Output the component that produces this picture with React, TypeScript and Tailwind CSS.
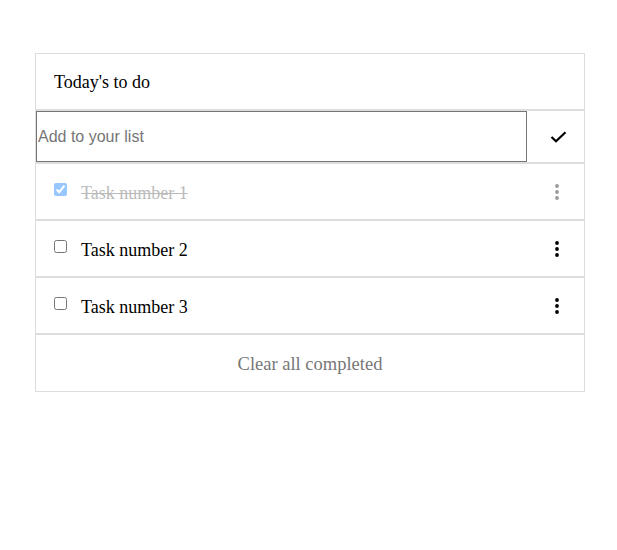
const Dots = ({ className = "" }: { className?: string }) => (
  <svg width="4" height="16" viewBox="0 0 4 16" className={className}>
    <circle cx="2" cy="2" r="1.9" fill="currentColor" />
    <circle cx="2" cy="8" r="1.9" fill="currentColor" />
    <circle cx="2" cy="14" r="1.9" fill="currentColor" />
  </svg>
);

const Task = ({ text, done }: { text: string; done?: boolean }) => (
  <li className="flex items-center h-[57px] border border-[#ddd] pl-[18px] pr-[25px]">
    <div className={`flex items-center flex-1 ${done ? "opacity-40" : ""}`}>
      <input type="checkbox" defaultChecked={done} className="w-[13px] h-[13px] m-0 -mt-1" />
      <span className={`ml-[14px] mt-[3px] text-[18px] ${done ? "line-through text-[#555]" : "text-black"}`}>
        {text}
      </span>
    </div>
    <Dots className={done ? "text-[#999]" : "text-black"} />
  </li>
);

export default function App() {
  return (
    <div className="w-[617px] h-[550px] bg-white pt-[53px] pl-[35px]" style={{ fontFamily: '"Liberation Serif", "Times New Roman", serif' }}>
      <div className="w-[550px]">
        <header className="h-[57px] border border-[#ddd] flex items-center pl-[18px] pt-[2px] text-[18px] text-black">
          Today's to do
        </header>
        <form className="flex border border-[#ddd] h-[53px]" onSubmit={(e) => e.preventDefault()}>
          <input
            placeholder="Add to your list"
            className="w-[491px] h-[51px] border border-[#767676] px-[1px] text-[16px] placeholder:text-[#757575] outline-none"
            style={{ fontFamily: '"Liberation Sans", Arial, sans-serif' }}
          />
          <button className="flex-1 flex items-center justify-center pl-[6px]">
            <svg width="17" height="12" viewBox="0 0 17 12">
              <path d="M1.5 6 L6 10.2 L15.5 1.2" fill="none" stroke="black" strokeWidth="2.2" />
            </svg>
          </button>
        </form>
        <ul>
          <Task text="Task number 1" done />
          <Task text="Task number 2" />
          <Task text="Task number 3" />
        </ul>
        <div className="h-[58px] border border-[#ddd] flex items-center justify-center pt-[3px] text-[18.5px] text-[#777]">
          Clear all completed
        </div>
      </div>
    </div>
  );
}
